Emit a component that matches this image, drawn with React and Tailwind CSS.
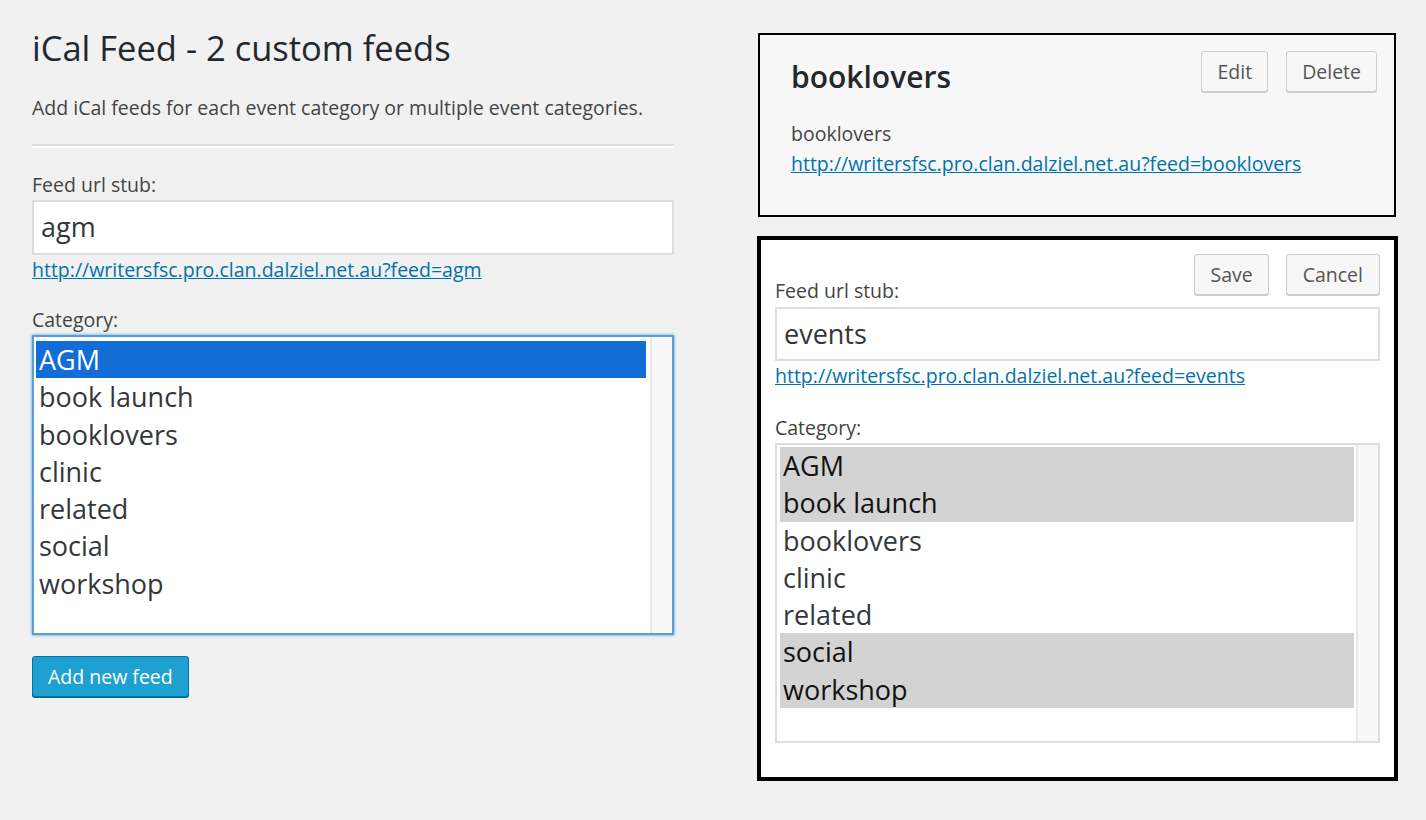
const CATEGORIES = ['AGM', 'book launch', 'booklovers', 'clinic', 'related', 'social', 'workshop'];

function Button({ children, className = '' }) {
  return (
    <button className={`h-[41px] px-[15px] rounded-[3px] border border-[#cccccc] bg-[#f7f7f7] shadow-[0_1px_0_#cccccc] text-[19.5px] text-[#555555] leading-none ${className}`}>
      {children}
    </button>
  );
}

function Listbox({ selected, focused, selectedClass }) {
  return (
    <div
      className={`flex h-[300px] bg-white border-2 ${
        focused ? 'border-[#5b9dd9] shadow-[0_0_3px_rgba(30,140,190,0.8)]' : 'border-[#dddddd]'
      }`}
    >
      <div className={`flex-1 flex flex-col ${focused ? 'pl-[2px] pt-[4px] pr-[4px]' : 'pl-[3px] pt-[2px] pr-[2px]'}`}>
        {CATEGORIES.map(c => (
          <div
            key={c}
            className={`h-[37.3px] leading-[37.3px] text-[27px] pl-[3px] ${
              selected.includes(c) ? selectedClass : 'text-[#32373c]'
            }`}
          >
            {c}
          </div>
        ))}
      </div>
      {/* scrollbar track */}
      <div className="w-[22px] bg-[#f8f8f8] border-l-2 border-[#e8e8e8]" />
    </div>
  );
}

export default function App() {
  return (
    <div className="min-h-[820px] bg-[#f1f1f1] flex font-['Open_Sans',sans-serif] text-[#444444]">
      {/* left column: add feed form */}
      <div className="w-[642px] ml-[32px] pt-[28px] shrink-0">
        <h1 className="text-[34.5px] leading-[40px] text-[#23282d]">iCal Feed - 2 custom feeds</h1>
        <p className="mt-[26px] text-[19.5px] leading-[28px] text-[#444444]">
          Add iCal feeds for each event category or multiple event categories.
        </p>
        <div className="mt-[22px] border-t-2 border-b-2 border-t-[#dddddd] border-b-white" />

        <div className="mt-[25px] text-[19.5px] leading-[24px]">Feed url stub:</div>
        <div className="mt-[3px] h-[55px] bg-white border-2 border-[#dddddd] flex items-center px-[7px] text-[27px] text-[#32373c]">
          agm
        </div>
        <a className="block text-[19.5px] leading-[30px] text-[#0073aa] underline">
          http://writersfsc.pro.clan.dalziel.net.au?feed=agm
        </a>

        <div className="mt-[23px] text-[19.5px] leading-[24px]">Category:</div>
        <div className="mt-[3px]">
          <Listbox selected={['AGM']} focused selectedClass="bg-[#126dd6] text-white" />
        </div>

        <button className="mt-[21px] h-[41px] px-[15px] rounded-[3px] border border-[#0073aa] bg-[#1ea1d1] shadow-[0_1px_0_#006799] text-[19.5px] text-white leading-none">
          Add new feed
        </button>
      </div>

      {/* right column: existing feeds */}
      <div className="ml-[83px] w-[641px] pt-[33px] shrink-0">
        <div className="ml-[1px] w-[638px] border-2 border-black bg-[#f7f7f7] pl-[31px] pr-[17px] pt-[16px] pb-[36px]">
          <div className="flex items-start justify-between">
            <h2 className="mt-[7px] text-[30px] leading-[38px] font-semibold text-[#23282d]">booklovers</h2>
            <div className="flex gap-[18px]">
              <Button>Edit</Button>
              <Button>Delete</Button>
            </div>
          </div>
          <div className="mt-[23px] text-[19.5px] leading-[30px]">booklovers</div>
          <a className="block text-[19.5px] leading-[30px] text-[#0073aa] underline">
            http://writersfsc.pro.clan.dalziel.net.au?feed=booklovers
          </a>
        </div>

        <div className="mt-[19px] border-4 border-black bg-white px-[14px] pt-[14px] pb-[34px]">
          <div className="flex items-end justify-between">
            <div className="text-[19.5px] leading-[24px]">Feed url stub:</div>
            <div className="flex gap-[17px] mb-[8px]">
              <Button>Save</Button>
              <Button className="px-[16px]">Cancel</Button>
            </div>
          </div>
          <div className="mt-[4px] h-[54px] bg-white border-2 border-[#dddddd] flex items-center px-[7px] text-[27px] text-[#32373c]">
            events
          </div>
          <a className="block text-[19.5px] leading-[30px] text-[#0073aa] underline">
            http://writersfsc.pro.clan.dalziel.net.au?feed=events
          </a>

          <div className="mt-[25px] text-[19.5px] leading-[24px]">Category:</div>
          <div className="mt-[3px]">
            <Listbox
              selected={['AGM', 'book launch', 'social', 'workshop']}
              selectedClass="bg-[#d3d3d3] text-[#111111]"
            />
          </div>
        </div>
      </div>
    </div>
  );
}
